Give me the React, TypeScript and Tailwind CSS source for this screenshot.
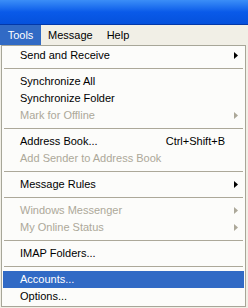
import React from "react";

type Item =
  | { kind: "sep" }
  | {
      kind: "item";
      label: string;
      shortcut?: string;
      sub?: boolean;
      disabled?: boolean;
      active?: boolean;
    };

const items: Item[] = [
  { kind: "item", label: "Send and Receive", sub: true },
  { kind: "sep" },
  { kind: "item", label: "Synchronize All" },
  { kind: "item", label: "Synchronize Folder" },
  { kind: "item", label: "Mark for Offline", sub: true, disabled: true },
  { kind: "sep" },
  { kind: "item", label: "Address Book...", shortcut: "Ctrl+Shift+B" },
  { kind: "item", label: "Add Sender to Address Book", disabled: true },
  { kind: "sep" },
  { kind: "item", label: "Message Rules", sub: true },
  { kind: "sep" },
  { kind: "item", label: "Windows Messenger", sub: true, disabled: true },
  { kind: "item", label: "My Online Status", sub: true, disabled: true },
  { kind: "sep" },
  { kind: "item", label: "IMAP Folders..." },
  { kind: "sep" },
  { kind: "item", label: "Accounts...", active: true },
  { kind: "item", label: "Options..." },
];

const Arrow = ({ color }: { color: string }) => (
  <svg width="4" height="7" viewBox="0 0 4 7" className="block">
    <path d="M0 0 L4 3.5 L0 7 Z" fill={color} />
  </svg>
);

export default function App() {
  return (
    <div
      className="w-[248px] h-[308px] overflow-hidden flex flex-col bg-[#f1efe6] text-[11px] leading-none text-black"
      style={{ fontFamily: '"Liberation Sans", Arial, sans-serif' }}
    >
      {/* window title bar */}
      <div className="h-[25px] shrink-0 bg-gradient-to-b from-[#3b8ef7] via-[#0a5ae9] to-[#0551dc] border-b border-[#0338a8]" />

      {/* menu bar */}
      <div className="h-[20px] shrink-0 flex items-stretch">
        <div className="w-[41px] flex items-center justify-center bg-[#316ac5] text-white">
          Tools
        </div>
        <div className="px-[7px] flex items-center">Message</div>
        <div className="px-[7px] flex items-center">Help</div>
      </div>

      {/* dropdown */}
      <div className="ml-px w-[245px] bg-[#fcfcfa] border border-[#a7a698] p-px">
        {items.map((it, i) =>
          it.kind === "sep" ? (
            <div key={i} className="h-[9px] flex items-center px-px">
              <div className="h-px w-full bg-[#aca899]" />
            </div>
          ) : (
            <div
              key={i}
              className={`h-[17px] flex items-center pl-[17px] pr-[6px] ${
                it.active ? "bg-[#316ac5] text-white" : ""
              } ${it.disabled ? "text-[#aca899]" : ""}`}
            >
              <span className="flex-1 whitespace-nowrap">{it.label}</span>
              {it.shortcut && (
                <span className="mr-[13px] whitespace-nowrap">{it.shortcut}</span>
              )}
              {it.sub && <Arrow color={it.disabled ? "#aca899" : "#000"} />}
            </div>
          )
        )}
      </div>
    </div>
  );
}
